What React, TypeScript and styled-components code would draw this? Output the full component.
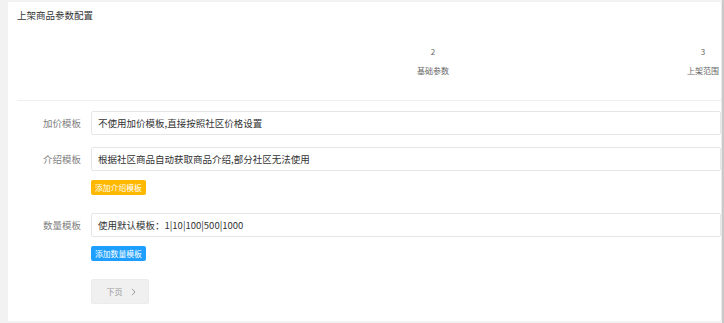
import styled, { createGlobalStyle } from "styled-components";

const GlobalStyle = createGlobalStyle`
  html, body {
    margin: 0;
    padding: 0;
    overflow: hidden;
    background: #f2f2f2;
  }
  * {
    box-sizing: border-box;
  }
`;

const Page = styled.div`
  width: 724px;
  height: 323px;
  padding: 2px 0 2px 8px;
  display: flex;
  font-family: "Noto Sans CJK SC", "Noto Sans", sans-serif;
`;

const Card = styled.div`
  flex: 1;
  background: #fff;
  border-right: 1px solid #e9e9e9;
  overflow: hidden;
`;

const Rail = styled.div`
  width: 2px;
  margin-top: -2px;
  margin-bottom: -2px;
  background: #c9c9c9;
`;

const Header = styled.div`
  height: 27px;
  line-height: 27px;
  padding-left: 9px;
  font-size: 9.5px;
  color: #333;
`;

const Steps = styled.div`
  margin-left: 9px;
  height: 72px;
  display: flex;
  padding-left: 11px;
  border-bottom: 1px solid #eeeeee;
`;

const Step = styled.div`
  flex: 0 0 270px;
  padding-top: 16px;
  display: flex;
  flex-direction: column;
  align-items: center;
  gap: 5px;
  color: #666;
  font-size: 8px;
  line-height: 14px;
`;

const Form = styled.div`
  padding-top: 10px;
`;

const FormItem = styled.div`
  display: flex;
  align-items: flex-start;
  margin-bottom: 12px;
`;

const Label = styled.div`
  width: 73px;
  margin-right: 10px;
  height: 24px;
  line-height: 24px;
  text-align: right;
  font-size: 9.5px;
  color: #808080;
`;

const Field = styled.div`
  flex: 1;
  display: flex;
  flex-direction: column;
  align-items: flex-start;
`;

const Input = styled.div`
  width: 100%;
  height: 24px;
  line-height: 22px;
  padding-left: 6px;
  border: 1px solid #e6e6e6;
  border-radius: 2px;
  font-size: 9.5px;
  color: #333;
  white-space: nowrap;
`;

const TagButton = styled.button<{ $color: string }>`
  margin-top: 9px;
  margin-bottom: 6px;
  height: 15px;
  padding: 0 4px;
  border: none;
  border-radius: 2px;
  background: ${(p) => p.$color};
  color: #fff;
  font-family: inherit;
  font-size: 7.8px;
  line-height: 15px;
  cursor: pointer;
`;

const Actions = styled.div`
  padding-left: 83px;
`;

const NextButton = styled.button`
  width: 58px;
  height: 25px;
  display: flex;
  align-items: center;
  justify-content: center;
  gap: 8px;
  border: 1px solid #ececec;
  border-radius: 2px;
  background: #f0f0f0;
  color: #999;
  font-family: inherit;
  font-size: 8px;
  cursor: not-allowed;
  padding: 0 0 0 2px;
`;

const App = () => {
  return (
    <>
      <GlobalStyle />
      <Page>
        <Card>
          <Header>上架商品参数配置</Header>
          <Steps>
            <Step />
            <Step>
              <span>2</span>
              <span>基础参数</span>
            </Step>
            <Step>
              <span>3</span>
              <span>上架范围</span>
            </Step>
          </Steps>
          <Form>
            <FormItem>
              <Label>加价模板</Label>
              <Field>
                <Input>不使用加价模板,直接按照社区价格设置</Input>
              </Field>
            </FormItem>
            <FormItem>
              <Label>介绍模板</Label>
              <Field>
                <Input>根据社区商品自动获取商品介绍,部分社区无法使用</Input>
                <TagButton $color="#ffb800">添加介绍模板</TagButton>
              </Field>
            </FormItem>
            <FormItem>
              <Label>数量模板</Label>
              <Field>
                <Input>使用默认模板：1|10|100|500|1000</Input>
                <TagButton $color="#1e9fff">添加数量模板</TagButton>
              </Field>
            </FormItem>
            <Actions>
              <NextButton disabled>
                <span>下页</span>
                <svg width="5" height="8" viewBox="0 0 5 8">
                  <path d="M1 0.8 L4 4 L1 7.2" fill="none" stroke="#999" strokeWidth="1" />
                </svg>
              </NextButton>
            </Actions>
          </Form>
        </Card>
        <Rail />
      </Page>
    </>
  );
};

export default App;
